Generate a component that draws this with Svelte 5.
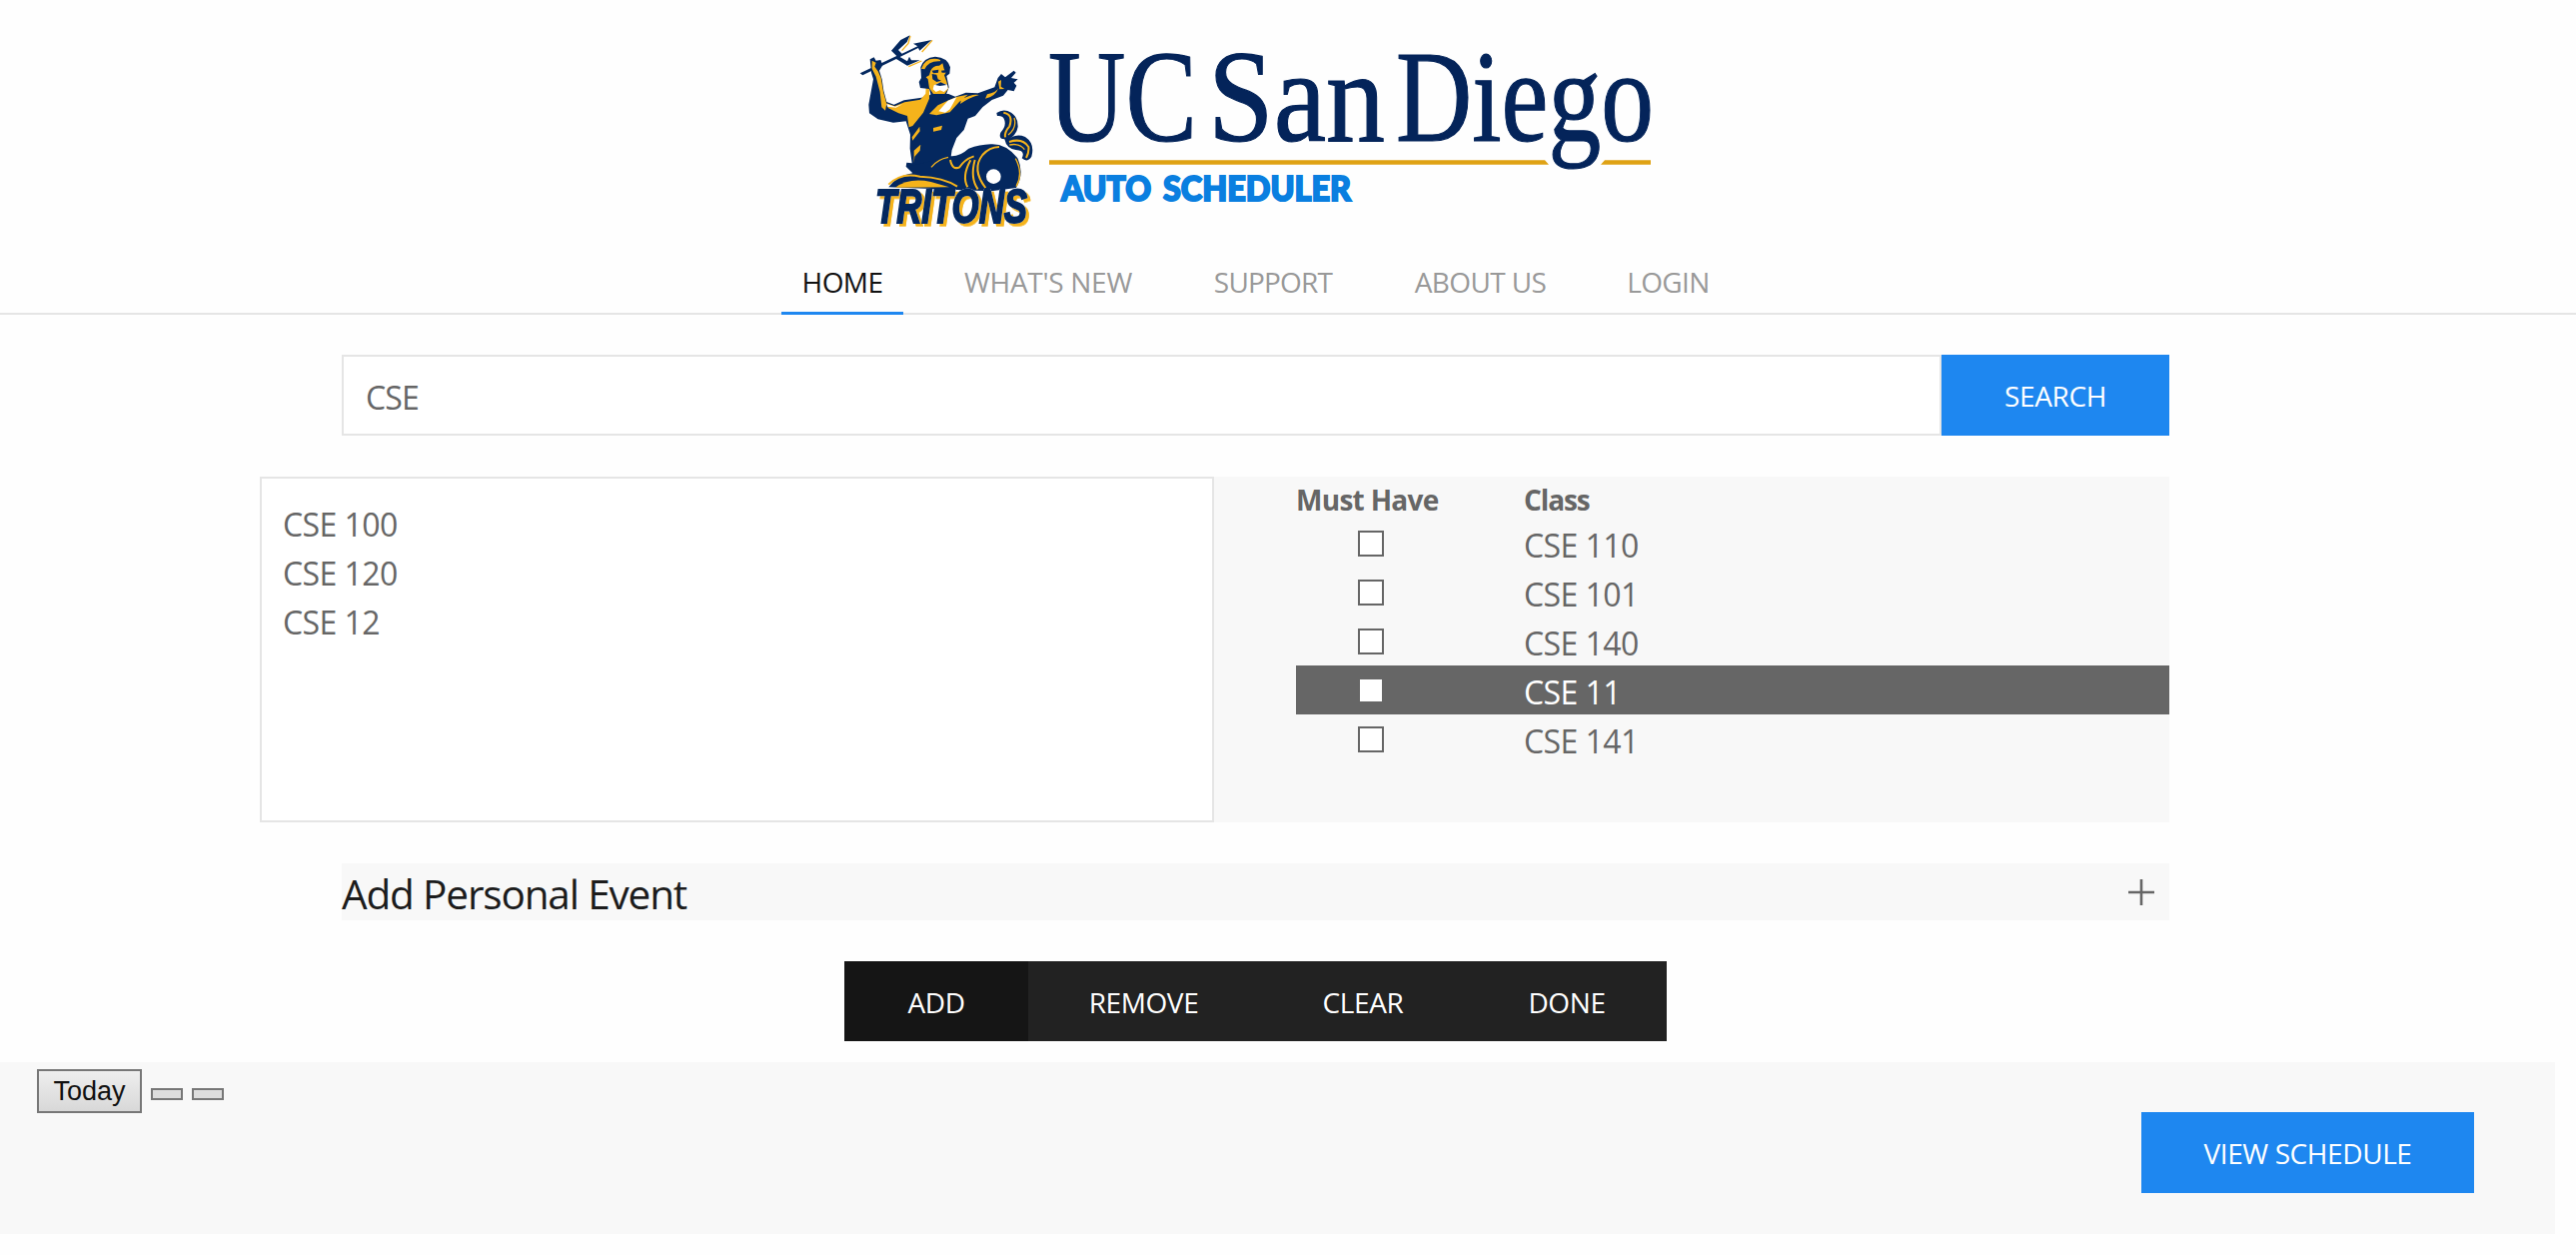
<script>
  let query = $state('CSE');
  const nav = [
    { label: 'HOME', id: 'home', active: true },
    { label: "WHAT'S NEW", id: 'news' },
    { label: 'SUPPORT', id: 'support' },
    { label: 'ABOUT US', id: 'about' },
    { label: 'LOGIN', id: 'login' }
  ];
  const results = ['CSE 100', 'CSE 120', 'CSE 12'];
  const chosen = ['CSE 110', 'CSE 101', 'CSE 140', 'CSE 11', 'CSE 141'];
  let selected = $state('CSE 11');
</script>

<header>
  <svg class="logo" viewBox="0 0 820 220" role="img" aria-label="UC San Diego Tritons Auto Scheduler">
    <g transform="scale(.33333)">
      <!-- trident -->
      <path fill="none" stroke="#f5b31b" stroke-width="4" d="M183 48L177 70L158 92M249 61L218 96M217 123L178 140" />
      <path fill="#04285f" d="M32 160L142 108L126 92L154 60L182 46L173 66L147 90L158 101L205 79L192 71L247 60L211 92L207 84L152 111L174 124L180 110L186 121L212 121L174 137L141 117L40 166Z" />
      <!-- raised arm, torso and pointing arm -->
      <path fill="#04285f" d="M62 118L74 112L80 122L94 120L100 136L90 152L98 178L103 212L112 246L134 254L164 241L212 234L234 230L250 220L298 222L318 230L350 218L386 220L436 202L446 174L456 162L468 172L494 152L500 158L486 174L506 178L494 188L502 197L494 214L476 210L462 227L428 240L400 262L378 288L356 296L344 330L322 354L308 390L303 424L290 448L196 448L170 440L172 428L188 430L182 386L183 344L170 304L132 308L86 298L60 280L58 254L72 178L66 158Z" />
      <path fill="#f5b31b" d="M68 122L80 128L76 140L86 154L95 174L102 216L112 252L108 272L97 262L92 216L80 170L68 146Z" />
      <path fill="#f5b31b" d="M112 250L136 259L166 247L213 239L229 221L231 180L240 184L240 236L222 278L190 318L179 322L174 288L148 280L116 264Z" />
      <path fill="#f5b31b" d="M240 282L266 256L302 239L324 230L356 224L330 246L302 277L262 286ZM336 238Q370 220 390 225Q360 233 333 252Z" />
      <path fill="#f5b31b" d="M188 352L211 320L212 334L190 362ZM252 324L279 317L276 330L252 335ZM194 392L214 374L212 392L196 410L194 430Z" />
      <path fill="#f5b31b" d="M414 223Q440 218 448 204Q438 231 408 236ZM447 185L456 180L455 200L466 207L451 208Z" />
      <path fill="#fff" d="M268 274L296 242L322 232L302 268L288 278ZM112 252L138 260L160 252L140 263L114 260Z" />
      <!-- head -->
      <path fill="#04285f" d="M214 142Q222 113 258 110Q295 112 303 142L301 161L292 168L299 202L290 226L246 228L240 207L213 204L209 186L216 174Z" />
      <path fill="#f5b31b" d="M216 146Q228 112 264 117Q278 119 272 124Q238 122 226 148Z" />
      <path fill="#f5b31b" d="M244 152Q252 136 270 137L280 130L284 146L290 158L285 166L292 185L297 206L286 222L252 222L240 204L236 178L230 172L240 166Z" />
      <path fill="#fff" d="M254 196L272 188L294 194L296 206L284 216L272 211L260 216L251 208Z" />
      <path fill="#04285f" d="M248 152L268 149L267 158L252 160ZM276 152L292 150L290 158L278 158ZM248 162L262 164L266 178L276 182L262 186L250 178ZM258 195L274 187L292 195L272 198Z" />
      <!-- coiled tail -->
      <path fill="#04285f" d="M118 502Q144 466 190 460L170 440Q240 428 300 408Q328 413 358 386Q392 374 424 373Q470 370 506 416Q526 462 501 504L426 514L380 512Z" />
      <circle cx="433" cy="470" r="22" fill="#fff" />
      <g fill="none" stroke="#f5b31b" stroke-width="6">
        <path d="M409 504Q366 448 400 405Q420 382 450 381" />
        <path d="M499 416Q523 461 501 500" stroke-width="4" />
        <path d="M355 502Q337 470 364 421M386 508Q362 475 377 420" />
        <path d="M303 420Q309 452 331 442Q345 419 374 409" />
        <path d="M118 494Q156 456 212 470Q282 472 324 500" />
        <path d="M246 442Q265 418 297 412" stroke-width="4" />
      </g>
      <path fill="#f5b31b" d="M138 503Q180 472 245 486L300 502Z" />
      <!-- tail fins -->
      <path fill="#04285f" d="M442 279Q463 264 486 278Q507 292 506 321Q502 344 481 356Q502 340 528 351Q558 371 547 410Q534 430 518 415Q530 392 500 390Q472 387 466 358Q447 358 454 338Q474 316 464 296Q459 286 444 288Z" />
      <g fill="none" stroke="#f5b31b" stroke-width="6">
        <path d="M463 278Q493 283 481 319Q465 337 468 352" />
        <path d="M495 294Q504 324 477 345" stroke-width="4" />
        <path d="M480 366Q520 353 538 381Q540 397 531 414" />
        <path d="M481 375Q512 369 526 389" stroke-width="4" />
      </g>
      <g class="tritons">
        <text x="78" y="608" textLength="456" lengthAdjust="spacingAndGlyphs">TRITONS</text>
      </g>
    </g>
    <g class="wordmark">
      <text x="199" y="120.5" textLength="149" lengthAdjust="spacingAndGlyphs">UC</text>
      <text x="359" y="120.5" textLength="177" lengthAdjust="spacingAndGlyphs">San</text>
      <text x="547" y="120.5" textLength="258" lengthAdjust="spacingAndGlyphs">Diego</text>
    </g>
    <path d="M200 140.3H696L700 144.8H200ZM756 140.3H802V144.8H752Z" fill="#dfa214" />
    <g class="product">
      <text x="212" y="181" textLength="90" lengthAdjust="spacingAndGlyphs">AUTO</text>
      <text x="314" y="181" textLength="188" lengthAdjust="spacingAndGlyphs">SCHEDULER</text>
    </g>
  </svg>
  <nav>
    {#each nav as item}
      <a class={item.id} class:active={item.active} href="#{item.id}">{item.label}</a>
    {/each}
  </nav>
</header>

<main>
  <form class="search">
    <input type="text" aria-label="Search classes" bind:value={query} />
    <button type="button" class="primary">SEARCH</button>
  </form>

  <section class="lists">
    <ul class="results">
      {#each results as name}<li>{name}</li>{/each}
    </ul>
    <div class="chosen">
      <div class="row head"><span class="must">Must Have</span><span class="cls">Class</span></div>
      {#each chosen as name}
        <div class="row" class:selected={name === selected}>
          <span class="must"><i class="box"></i></span><span>{name}</span>
        </div>
      {/each}
    </div>
  </section>

  <section class="event">
    <h3>Add Personal Event</h3>
    <svg viewBox="0 0 28 28"><path d="M1 14H27M14 1V27" stroke="#666" stroke-width="2.6" /></svg>
  </section>

  <div class="actions">
    <button class="add">ADD</button>
    <button class="remove">REMOVE</button>
    <button class="clear">CLEAR</button>
    <button class="done">DONE</button>
  </div>
</main>

<footer>
  <div class="cal">
    <button class="today">Today</button>
    <button class="tiny" aria-label="Previous"></button>
    <button class="tiny" aria-label="Next"></button>
  </div>
  <button class="primary view">VIEW SCHEDULE</button>
</footer>

<style>
  :global(body) {
    background: #fefefe;
    font-family: 'Open Sans', 'Noto Sans', sans-serif;
    font-size: 32px;
    color: #666;
  }
  button {
    border: 0;
    padding: 0;
    margin: 0;
    font-family: inherit;
    font-size: 28px;
    color: #fff;
    white-space: nowrap;
  }
  header {
    box-sizing: border-box;
    height: 315px;
    padding-top: 20px;
    border-bottom: 2.5px solid #e5e5e5;
    display: flex;
    flex-direction: column;
  }
  .logo {
    width: 820px;
    height: 220px;
    margin-left: 850px;
    flex: none;
    overflow: visible;
  }
  .tritons text {
    font: italic bold 146px 'Liberation Sans', sans-serif;
    fill: #04285f;
    stroke: #04285f;
    stroke-width: 6px;
  }
  .tritons {
    filter: drop-shadow(0 0 1.5px #fff) drop-shadow(9px 8px 0 #f5b31b);
  }
  .wordmark text {
    font: 131px 'Liberation Serif', serif;
    fill: #04245a;
    stroke: #04245a;
    stroke-width: 1.2;
  }
  .product text {
    font: 900 35px Lato, sans-serif;
    fill: #0a7fe0;
    stroke: #0a7fe0;
    stroke-width: 2;
  }
  nav {
    display: flex;
    gap: 41px;
    margin-left: 782px;
    height: 75px;
  }
  nav a {
    box-sizing: border-box;
    height: 75px;
    line-height: 84px;
    text-align: center;
    white-space: nowrap;
    font-size: 28px;
    color: #999;
    text-decoration: none;
  }
  .home { width: 122px; letter-spacing: -0.6px; }
  .news { width: 208px; letter-spacing: -0.3px; }
  .support { width: 160px; letter-spacing: -0.8px; }
  .about { width: 173px; letter-spacing: -0.6px; }
  .login { width: 121px; letter-spacing: -0.6px; }
  nav .active {
    color: #111;
    border-bottom: 3px solid #1e87f0;
  }
  main {
    padding: 40px 407px 0 260px;
  }
  .search {
    display: flex;
    height: 81px;
    margin-left: 82px;
  }
  input {
    box-sizing: border-box;
    flex: 1;
    min-width: 0;
    border: 2px solid #e5e5e5;
    background: #fff;
    padding: 4px 22px 0;
    font: inherit;
    color: #666;
    letter-spacing: -0.8px;
    outline: none;
  }
  .primary {
    background: #1e87f0;
    width: 228px;
    letter-spacing: -0.4px;
    padding-top: 1px;
  }
  .lists {
    display: flex;
    height: 346px;
    margin-top: 41px;
    line-height: 49px;
    letter-spacing: -0.55px;
  }
  ul {
    box-sizing: border-box;
    width: 955px;
    margin: 0;
    padding: 21px;
    border: 2.5px solid #e5e5e5;
    background: #fff;
    list-style: none;
  }
  .chosen {
    flex: 1;
    background: #f8f8f8;
    padding-left: 82px;
  }
  .row {
    display: flex;
    height: 49px;
    line-height: 53px;
  }
  .must {
    width: 228px;
    flex: none;
  }
  .head {
    height: 42px;
    line-height: 46px;
    font-size: 28px;
    font-weight: 700;
    letter-spacing: -0.7px;
  }
  .head .cls { letter-spacing: -1.1px; }
  .selected {
    background: #666;
    color: #fff;
  }
  .box {
    box-sizing: border-box;
    display: block;
    width: 26px;
    height: 26px;
    margin: 12px 0 0 62px;
    border: 2px solid #666;
    background: #fff;
  }
  .event {
    display: flex;
    justify-content: space-between;
    margin: 41px 0 0 82px;
    height: 57px;
    background: #f8f8f8;
  }
  h3 {
    margin: 0;
    font-size: 40.5px;
    font-weight: 400;
    line-height: 61px;
    letter-spacing: -1.15px;
    color: #1c1c1c;
  }
  .event svg {
    width: 28px;
    height: 28px;
    margin: 15px 14px 0 0;
  }
  .actions {
    display: flex;
    width: 823px;
    height: 80px;
    margin: 41px 0 0 585px;
    background: #222;
  }
  .actions button {
    background: none;
    padding-top: 2px;
    letter-spacing: -0.4px;
  }
  .actions .add { width: 184px; background: #151515; }
  .remove { width: 231px; }
  .clear { width: 208px; }
  .done { width: 200px; }
  footer {
    box-sizing: border-box;
    display: flex;
    justify-content: space-between;
    align-items: flex-start;
    width: 2557px;
    height: 172px;
    margin-top: 21px;
    padding: 0 81px 0 37px;
    background: #f8f8f8;
  }
  .cal {
    display: flex;
    gap: 9px;
    padding-top: 7px;
  }
  .cal button {
    box-sizing: border-box;
    border: 2px solid #777;
    background: linear-gradient(#eee, #d8d8d8);
  }
  .today {
    width: 105px;
    height: 44px;
    font: 27px 'Liberation Sans', sans-serif;
    color: #111;
  }
  .cal .tiny {
    width: 32px;
    height: 12px;
    margin-top: 19px;
    background: #ddd;
  }
  .view {
    width: 333px;
    height: 81px;
    margin-top: 50px;
  }
</style>
